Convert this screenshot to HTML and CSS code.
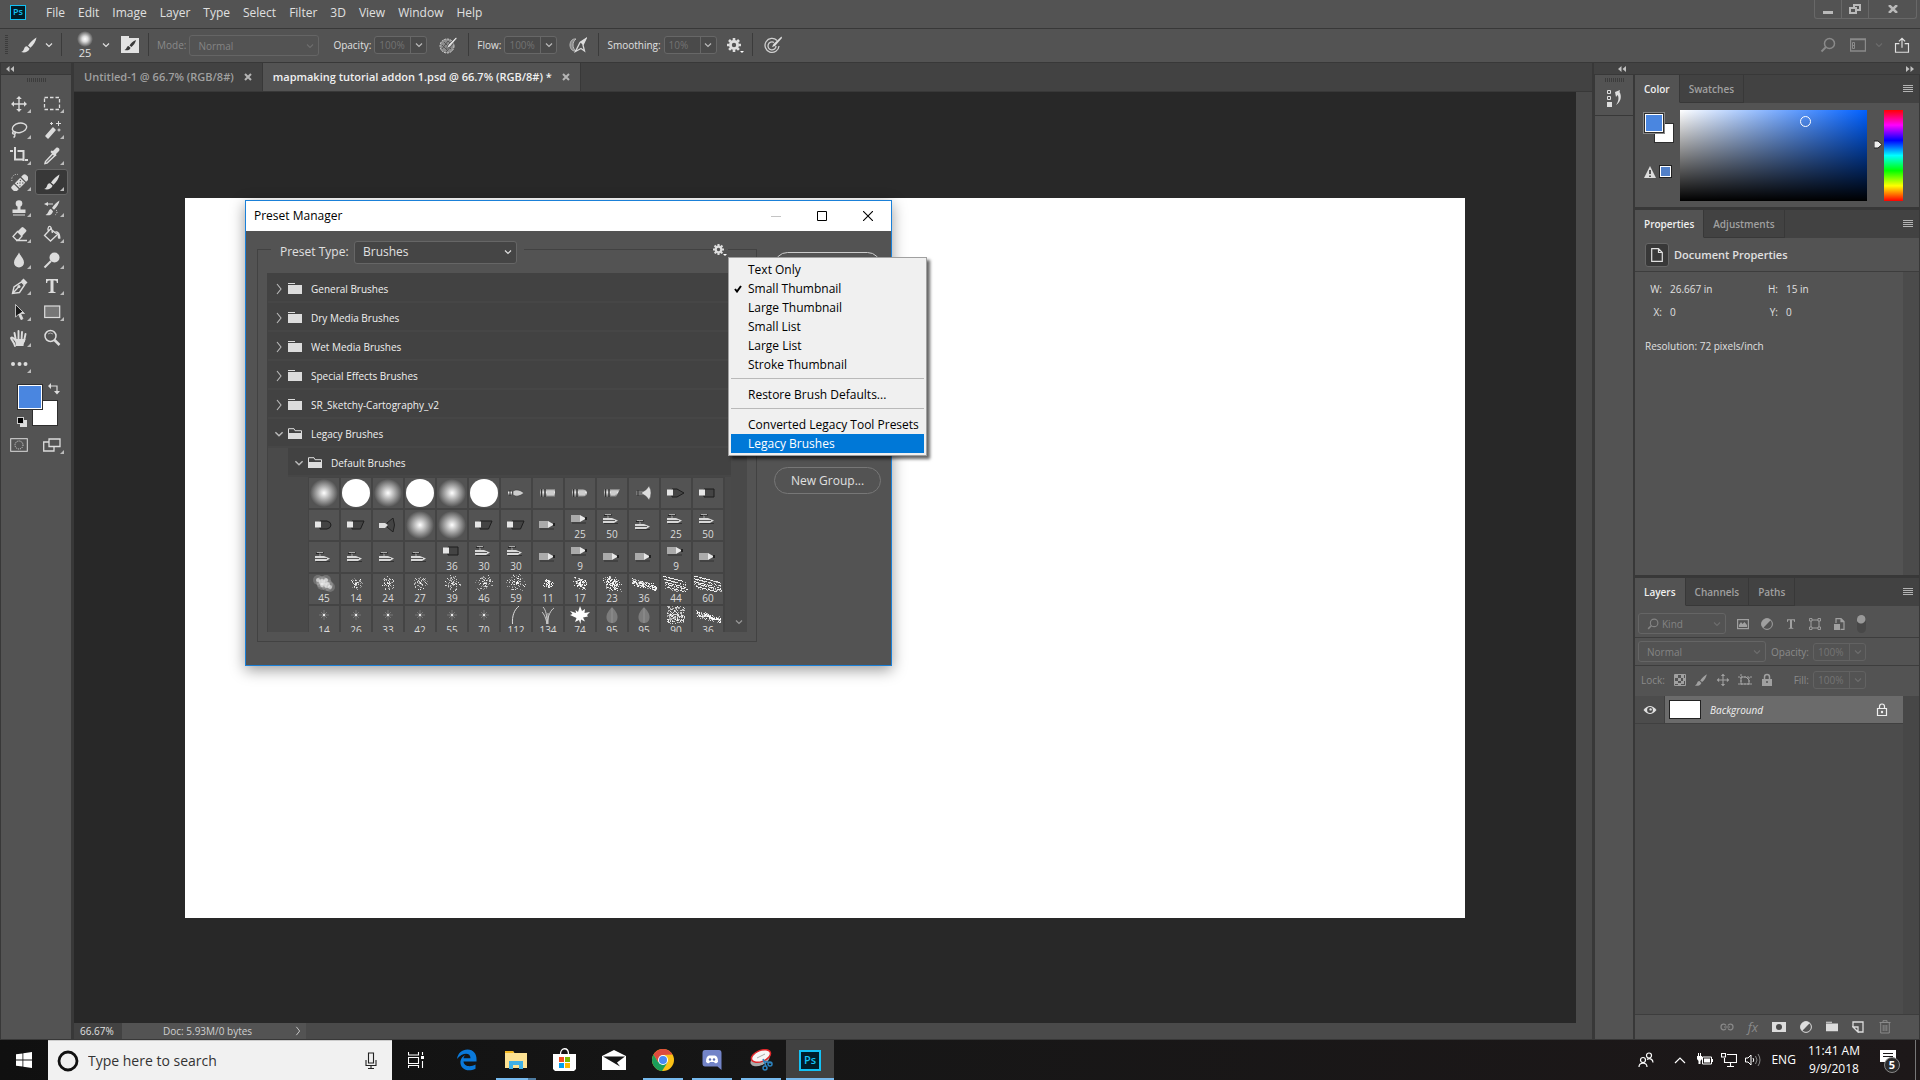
FILE: index.html
```html
<!DOCTYPE html>
<html lang="en">
<head>
    <meta charset="UTF-8">
    <meta name="viewport" content="width=device-width, initial-scale=1.0">
    <title>mapmaking tutorial addon 1.psd</title>
    <link rel="stylesheet" href="styles.css">
</head>
<body>
    <!-- icon sheet -->
    <svg class="sheet" aria-hidden="true">
        <symbol id="i-down" viewBox="0 0 10 10"><path d="M2 3.5 5 6.5 8 3.5" fill="none" stroke="currentColor" stroke-width="1.2"/></symbol>
        <symbol id="i-right" viewBox="0 0 10 12"><path d="M3 1 7 6 3 11" fill="none" stroke="currentColor" stroke-width="1.1"/></symbol>
        <symbol id="i-dbl-left" viewBox="0 0 8 6"><path d="M3.5 0V6L0 3ZM8 0V6L4.500 3Z" fill="currentColor"/></symbol>
        <symbol id="i-dbl-right" viewBox="0 0 8 6"><path d="M0 0V6L3.500 3ZM4.500 0V6L8 3Z" fill="currentColor"/></symbol>
        <symbol id="i-close" viewBox="0 0 8 8"><path d="M1 1 7 7M7 1 1 7" stroke="currentColor" stroke-width="2"/></symbol>
        <symbol id="i-brush" viewBox="0 0 18 18"><path d="M16.500 1.500c-3 1.500-6.500 5-8.500 8l2.500 2.200c3-2.500 5.500-6.700 6-10.200zM7 10.300c-2 0-2.500 1.200-3 2.700-.5 1.500-1.500 2.500-2.800 3 3 1 6.800.4 8.400-3.300z" fill="currentColor"/></symbol>
        <symbol id="i-brushpanel" viewBox="0 0 18 18"><path d="M0 0h8v2h10v15H0z" fill="#e3e3e3"/><path d="M15 4c-3 1-5 3-6.500 5.500l2 1.600C12.500 9 14.500 7 15 4zM7.500 10c-2 0-1.500 3-4 4 2.500.8 5.500.3 6-2.300z" fill="#3a3a3a"/></symbol>
        <symbol id="i-pressure" viewBox="0 0 18 18"><circle cx="8" cy="10" r="7" fill="#8c8c8c" stroke="#d0d0d0" stroke-dasharray="2 1"/><path d="M5 6 12 13M3 9l6 6M9 5l4 4M3 13l6-8M7 16l7-8" stroke="#555"/><path d="M17 1 9 9l-1.500 3.500L11 11l7-8.500z" fill="#dedede" stroke="#535353" stroke-width=".8"/></symbol>
        <symbol id="i-airbrush" viewBox="0 0 18 18"><path d="M7 3C-1 2-1 16 7 15 3 12 3 6 7 3z" fill="#8c8c8c" stroke="#bbb"/><path d="M17 2.500 11 6.500 6.500 15.500 12 12.500 15.500 15 14 9z" fill="none" stroke="#d8d8d8" stroke-width="1.300"/><path d="m18 1.500-7 4.500 3 3z" fill="#ddd"/></symbol>
        <symbol id="i-target" viewBox="0 0 18 18"><g fill="none" stroke="#d0d0d0" stroke-width="1.300"><path d="M13 4.500A7 7 0 1 0 15 10"/><path d="M10 6.500A4 4 0 1 0 12 10"/></g><path d="M17.500.5 9.500 8l-1.500 3 3-1 7-8z" fill="#ddd"/></symbol>
        <symbol id="i-gear" viewBox="0 0 14 14"><circle cx="7" cy="7" r="3.600" fill="none" stroke="currentColor" stroke-width="2.800"/><path d="M7 0v14M0 7h14M2 2l10 10M12 2 2 12" stroke="currentColor" stroke-width="2.600" stroke-dasharray="2.500 9 2.500 99"/></symbol>
        <symbol id="i-search" viewBox="0 0 16 16"><circle cx="9.500" cy="6.500" r="5" fill="none" stroke="currentColor" stroke-width="1.500"/><path d="M6 10 1.500 14.500" stroke="currentColor" stroke-width="2"/></symbol>
        <symbol id="i-workspace" viewBox="0 0 16 14"><path d="M.500 1v12h15V1zM0 1.500h16" fill="none" stroke="currentColor" stroke-width="1.400"/><path d="M2.500 4.500h2v6h-2zM2.500 7.500h2" fill="none" stroke="currentColor"/></symbol>
        <symbol id="i-share" viewBox="0 0 16 18"><path d="M5 7.500H.700v9.700h14.600V7.500H11M8 12V2M4.500 5 8 1.500 11.500 5" fill="none" stroke="currentColor" stroke-width="1.300"/></symbol>
        <symbol id="i-menu" viewBox="0 0 10 8"><path d="M0 .5h10M0 2.500h10M0 4.500h10M0 6.500h10" stroke="currentColor"/></symbol>
        <symbol id="i-history" viewBox="0 0 16 18"><path d="M1.500 1.500h3v3h-3zM1.500 7.500h3v3h-3z" fill="none" stroke="#dedede"/><path d="M1 13h5v5H1zM9 3l5-2-.5 2C16 7 15 13 10 16c3-4 3-8 1.500-10L10 8z" fill="#dedede"/></symbol>

        <symbol id="t-move" viewBox="0 0 18 18"><path d="M9 2v14M2 9h14" stroke="currentColor" stroke-width="1.400"/><path d="m9 1 2.800 3H6.200zM9 17l2.800-3H6.200zM1 9l3-2.800v5.600zM17 9l-3-2.800v5.600z" fill="currentColor"/></symbol>
        <symbol id="t-marquee" viewBox="0 0 18 18"><rect x="1.500" y="2.500" width="15" height="12" fill="none" stroke="currentColor" stroke-width="1.300" stroke-dasharray="3.500 2"/></symbol>
        <symbol id="t-lasso" viewBox="0 0 18 18"><g fill="none" stroke="currentColor" stroke-width="1.400"><ellipse cx="9.500" cy="7" rx="7.300" ry="4.700" transform="rotate(-12 9 7)"/><path d="M4 10.500c-2 .5-2 2.500 0 2.500s2-2 0-2.500M4.500 13c1 1.500 0 3-1 3.500"/></g></symbol>
        <symbol id="t-wand" viewBox="0 0 18 18"><path d="m3 15 7-8 2 2-7 8z" stroke="currentColor" fill="currentColor" stroke-linejoin="round" stroke-width="1.500"/><path d="M7 2.500h3M15.500 0v5M13 2.500h5M16 7.500v3M14.500 9h3M8.500 1v3" stroke="currentColor"/></symbol>
        <symbol id="t-crop" viewBox="0 0 18 18"><path d="M0 4h3M5 0v12.500h7.500M7.500 4h6v10M15 13h3" stroke="currentColor" stroke-width="2" fill="none"/></symbol>
        <symbol id="t-dropper" viewBox="0 0 18 18"><path d="m10 6.500-7.500 8-.5 2 2-.5 8-7.500" fill="none" stroke="currentColor" stroke-width="1.500"/><path d="m8.500 3.500 1.500.5 3-3c2-1.500 4.500 1 3 3l-3 3 .5 1.500-2 1L7.500 5z" fill="currentColor"/></symbol>
        <symbol id="t-heal" viewBox="0 0 18 18"><g transform="rotate(-45 10 10)"><rect x="0" y="6.500" width="20" height="7" rx="2" fill="currentColor"/><path d="M5.500 6v8M14.500 6v8M8 8.500h0M12 8.500h0M10 10h0M8 12h0M12 12h0" stroke="#535353" stroke-width="1.300" stroke-linecap="round"/></g><path d="M2 8A5 5 0 0 1 8 1.500" fill="none" stroke="currentColor" stroke-dasharray="1 1.500"/></symbol>
        <symbol id="t-stamp" viewBox="0 0 18 18"><circle cx="9" cy="4.500" r="3.300" fill="currentColor"/><path d="M7.500 7h3v3.500h5V14h-13v-3.500h5zM3 15.500h12v1H3z" fill="currentColor"/></symbol>
        <symbol id="t-histbrush" viewBox="0 0 18 18"><path d="M16.500 1.500c-3 1.500-5.500 4.500-7.500 7.500l2 1.800c2.500-2.500 5-6 5.500-9.300zM8 10c-3 .5-2 4.500-5.500 6 3 1 6.800 0 7.500-3.800z" fill="currentColor"/><path d="M1 5l4-2v1.500h5v1H5V7z" fill="currentColor"/><path d="M13 11c2 1 1 4-1 5" fill="none" stroke="currentColor" stroke-dasharray="1 1.300"/></symbol>
        <symbol id="t-eraser" viewBox="0 0 18 18"><path d="m7.500 6.500 4-4q1-1 2 0l2.500 2.200q1 1 0 2L12 11z" fill="currentColor"/><path d="M7.500 6.500 3 11.500 6.500 15h2l3.500-4zM6 15.500h11" fill="none" stroke="currentColor" stroke-width="1.300"/></symbol>
        <symbol id="t-bucket" viewBox="0 0 18 18"><path d="m7.500 4-6 6.500 6 5.500 7-6.500zM5.500 6.500C4 2 6.500 0 8 2.500L9.500 8" fill="none" stroke="currentColor" stroke-width="1.300"/><path d="M12 6c4 0 5.500 3 5.500 7.500-3 1.500-3-2-2.500-4z" fill="currentColor"/></symbol>
        <symbol id="t-blur" viewBox="0 0 18 18"><path d="M9 1.500c2 4.500 5 6 5 10a5 5 0 0 1-10 0c0-4 3-5.500 5-10z" fill="currentColor"/></symbol>
        <symbol id="t-dodge" viewBox="0 0 18 18"><circle cx="11.500" cy="6.500" r="5" fill="currentColor"/><path d="m8 10-6.500 6.500" stroke="currentColor" stroke-width="2"/></symbol>
        <symbol id="t-pen" viewBox="0 0 18 18"><path d="M2.500 16.500 4 10l7.500-5 3 3-5 7.500zM3 16l6-6.500" fill="none" stroke="currentColor" stroke-width="1.400"/><circle cx="9" cy="9.500" r="1.500" fill="currentColor"/><path d="m11 4 2.500-2.500 4 4L15 8z" fill="currentColor"/></symbol>
        <symbol id="t-type" viewBox="0 0 18 18"><path d="M3 2h12v4h-1.200c0-1.800-.6-2.500-2-2.500h-1.300V14c0 .8.500 1 2 1v1h-7v-1c1.500 0 2-.2 2-1V3.500H6.200c-1.400 0-2 .7-2 2.500H3z" fill="currentColor"/></symbol>
        <symbol id="t-select" viewBox="0 0 18 18"><path d="M5.500 1.500v12.700l3-3 2.500 5.500 2-1-2.500-5.200h4z" fill="#1b1b1b" stroke="currentColor" stroke-width=".8"/><path d="M8.500 11.200l2.500 5.500 2-1-2.500-5.200h4l-2-2z" fill="currentColor"/></symbol>
        <symbol id="t-rect" viewBox="0 0 18 18"><rect x="1.700" y="3" width="15" height="11.500" fill="#777" stroke="currentColor" stroke-width="1.200"/></symbol>
        <symbol id="t-hand" viewBox="0 0 18 18"><path d="M5 17C4 13 1.500 11 1 9c1-1.200 2.500 0 4 2M6 12 4.500 4M8.500 11V2M11.500 11l.5-8M14 12l1.500-7" fill="none" stroke="currentColor" stroke-width="1.900" stroke-linecap="round"/><path d="M5 10h10.500c-.5 3-2 4-2 7H6z" fill="currentColor"/></symbol>
        <symbol id="t-zoom" viewBox="0 0 18 18"><circle cx="7.500" cy="7" r="5.500" fill="none" stroke="currentColor" stroke-width="1.500"/><path d="M5 5q2-2 5 0" stroke="#aaa" fill="none"/><path d="m11.500 11 5 5" stroke="currentColor" stroke-width="2.500"/></symbol>
        <symbol id="t-more" viewBox="0 0 18 18"><path d="M3 9h.01M9.500 9h.01M15.500 9h.01" stroke="currentColor" stroke-width="4" stroke-linecap="round"/></symbol>
        <symbol id="i-swap" viewBox="0 0 12 12"><path d="M3 3h6v6" fill="none" stroke="currentColor" stroke-width="1.200"/><path d="M0 3l3-3v6zM6 8h6l-3 3.500z" fill="currentColor"/></symbol>
        <symbol id="i-mask" viewBox="0 0 18 14"><rect x=".700" y=".700" width="16.600" height="12.600" fill="none" stroke="currentColor"/><circle cx="9" cy="7" r="4" fill="none" stroke="currentColor" stroke-dasharray="1 1"/></symbol>
        <symbol id="i-screen" viewBox="0 0 18 14"><path d="M6 1h11v7.500H6zM6 4H.700v9H11V8.500" fill="none" stroke="currentColor" stroke-width="1.300"/></symbol>

        <symbol id="i-folder" viewBox="0 0 14 12"><path d="M0 0h7v1H0zM0 2h14v9H0z" fill="currentColor"/></symbol>
        <symbol id="i-folder-open" viewBox="0 0 14 12"><path d="M.500 11V.700h5.500l1 2h6.500V5" fill="none" stroke="currentColor"/><path d="M0 5h14v6H0z" fill="currentColor"/></symbol>
        <symbol id="i-warn" viewBox="0 0 12 12"><path d="M6 0 12 12H0z" fill="#ddd"/><path d="M6 4v4M6 9.500V11" stroke="#333" stroke-width="1.600"/></symbol>
        <symbol id="i-page" viewBox="0 0 12 14"><path d="M.700.700H7.500L11.300 4.500v8.800H.700zM7.500.700v3.800h3.800" fill="none" stroke="#e0e0e0" stroke-width="1.200"/></symbol>
        <symbol id="i-image" viewBox="0 0 12 12"><rect x=".600" y="1.600" width="10.800" height="9" fill="none" stroke="currentColor" stroke-width="1.200"/><path d="M2 9V7l2-3 1.500 2L7.500 4 10 7v2z" fill="currentColor"/></symbol>
        <symbol id="i-adjust" viewBox="0 0 12 12"><circle cx="6" cy="6" r="5.400" fill="none" stroke="currentColor"/><path d="M9.900 2.100A5.500 5.500 0 0 0 2.100 9.900z" fill="currentColor"/></symbol>
        <symbol id="i-shape" viewBox="0 0 12 12"><path d="M2 2h8v8H2z" fill="none" stroke="currentColor"/><path d="M.500.500h2.500v2.500H.500zM9 .500h2.500v2.500H9zM.500 9h2.500v2.500H.500zM9 9h2.500v2.500H9z" fill="#535353" stroke="currentColor" stroke-width=".900"/></symbol>
        <symbol id="i-smart" viewBox="0 0 12 12"><path d="M3 5V.600h5l3 3v7.800H7.500M8 .600v3h3" fill="none" stroke="currentColor" stroke-width="1.200"/><path d="M1 6h6v6H1z" fill="currentColor"/></symbol>
        <symbol id="i-checker" viewBox="0 0 12 12"><path d="M.500.500h11v11H.500z" fill="none" stroke="currentColor"/><path d="M1 1h3v3H1zM7 1h3v3H7zM4 4h3v3H4zM9 4h2v3H9zM1 7h3v3H1zM7 7h3v3H7zM4 9h3v2H4z" fill="currentColor"/></symbol>
        <symbol id="i-artboard" viewBox="0 0 14 12"><path d="M3 0v12M0 3h14M11 3v9M0 10h14" fill="none" stroke="currentColor" stroke-dasharray="2 1"/><path d="M3 3h5l3 3v4H3z" fill="none" stroke="currentColor"/></symbol>
        <symbol id="i-lock" viewBox="0 0 12 14"><path d="M3.500 6V4a2.500 2.500 0 0 1 5 0v2" fill="none" stroke="currentColor" stroke-width="1.500"/><path d="M1 6h10v7H1z" fill="currentColor"/><circle cx="6" cy="9" r="1" fill="#535353"/></symbol>
        <symbol id="i-lock-line" viewBox="0 0 12 14"><path d="M3.500 5.500V3.500a2.500 2.500 0 0 1 5 0v2M1.500 5.500h9v7h-9z" fill="none" stroke="currentColor" stroke-width="1.200"/><circle cx="6" cy="9" r="1.200" fill="currentColor"/></symbol>
        <symbol id="i-eye" viewBox="0 0 14 10"><path d="M.500 5Q7-3 13.500 5 7 13 .500 5z" fill="currentColor"/><circle cx="7" cy="5" r="2.900" fill="#4a4a4a"/><circle cx="7.600" cy="4.400" r="1.200" fill="currentColor"/></symbol>
        <symbol id="i-link" viewBox="0 0 14 8"><path d="M6 2.500C5 .500 1 .500 1 4s4 3.500 5 1.500M8 2.500C9 .500 13 .500 13 4s-4 3.500-5 1.500M4 4h6" fill="none" stroke="currentColor" stroke-width="1.200"/></symbol>
        <symbol id="i-addmask" viewBox="0 0 14 12"><path d="M0 1h14v10H0z" fill="currentColor"/><circle cx="7" cy="6" r="3" fill="#4a4a4a"/></symbol>
        <symbol id="i-new" viewBox="0 0 12 12"><path d="M1 6V1h10v10H6M6 11 1 6h5z" fill="none" stroke="currentColor" stroke-width="1.300"/></symbol>
        <symbol id="i-trash" viewBox="0 0 12 14"><path d="M.500 2.500h11M4 2V.700h4V2M1.700 3v10h8.600V3M4.200 5v6M6 5v6M7.800 5v6" fill="none" stroke="currentColor"/></symbol>

        <!-- brush tips -->
        <linearGradient id="metal" x1="0" y1="0" x2="0" y2="1"><stop offset="0" stop-color="#777"/><stop offset=".4" stop-color="#eee"/><stop offset="1" stop-color="#666"/></linearGradient>
        <radialGradient id="soft"><stop offset="0" stop-color="#fff"/><stop offset=".3" stop-color="#ccc"/><stop offset="1" stop-color="#535353"/></radialGradient>
        <symbol id="b-point" viewBox="0 0 18 10"><path d="M1 3h4v4H1z" fill="url(#metal)"/><path d="M3 2v6" stroke="#333"/><path d="M6 3Q11 0 17 5 11 10 6 7z" fill="#ccc" stroke="#333" stroke-width=".5"/></symbol>
        <symbol id="b-flat" viewBox="0 0 18 10"><path d="M1 1h15v8H1z" fill="url(#metal)"/><path d="M2.500 1v8M6 1v8" stroke="#333" stroke-width="1.500"/><path d="M8 2.500h7v5H8z" fill="#ccc"/></symbol>
        <symbol id="b-curve" viewBox="0 0 18 10"><path d="M1 1h11q4 1 4 4t-4 4H1z" fill="url(#metal)"/><path d="M2.500 1v8M6 1v8" stroke="#333" stroke-width="1.500"/><path d="M8 2.500h6v5H8z" fill="#ccc"/></symbol>
        <symbol id="b-angle" viewBox="0 0 18 10"><path d="M1 1h16l-4 8H1z" fill="url(#metal)"/><path d="M2.500 1v8M6 1v8" stroke="#333" stroke-width="1.500"/><path d="M8 2.500h7l-3 5H8z" fill="#ccc"/></symbol>
        <symbol id="b-fan" viewBox="0 0 18 14"><path d="M1 5h7v4H1z" fill="#777"/><path d="M3 4v6" stroke="#333"/><path d="M7 6q4-1 7-6 4 7 0 14-3-5-7-6z" fill="#ddd" stroke="#555" stroke-width=".5"/></symbol>
        <symbol id="b-dpoint" viewBox="0 0 18 10"><path d="M5 1h5l7 4-7 4H5z" fill="#444" stroke="#1d1d1d"/><path d="M0 1.500h6v6H0z" fill="#e6e6e6"/></symbol>
        <symbol id="b-dflat" viewBox="0 0 18 10"><path d="M5 1h10v8H5z" fill="#444" stroke="#1d1d1d"/><path d="M0 1.500h6v6H0z" fill="#e6e6e6"/></symbol>
        <symbol id="b-dcurve" viewBox="0 0 18 10"><path d="M5 1h7q4 1 4 4t-4 4H5z" fill="#444" stroke="#1d1d1d"/><path d="M0 1.500h6v6H0z" fill="#e6e6e6"/></symbol>
        <symbol id="b-dangle" viewBox="0 0 18 10"><path d="M5 1h12l-3.500 8H5z" fill="#444" stroke="#1d1d1d"/><path d="M0 1.500h6v6H0z" fill="#e6e6e6"/></symbol>
        <symbol id="b-dfan" viewBox="0 0 18 14"><path d="M8 5l6-5q3 7 0 14l-6-5z" fill="#444" stroke="#222"/><path d="M0 5h6l3 2-3 3H0z" fill="#ddd"/></symbol>
        <symbol id="b-pencil" viewBox="0 0 18 10"><path d="M1 9h14" stroke="#333"/><path d="M0 1h9v7H0z" fill="#aaa"/><path d="M9 1l6 3.500L9 8z" fill="#e8e8e8"/><path d="M14 3h2v3h-2z" fill="#222"/></symbol>
        <symbol id="b-air" viewBox="0 0 18 10"><path d="M1 1.500h3M5 1h4" stroke="#222"/><path d="M2 .500h6M5 2v2" stroke="#aaa"/><path d="M1 9.500h14" stroke="#333"/><path d="M0 4h9l6 2.500L11 9H0z" fill="#d8d8d8"/><path d="M0 6.500h12" stroke="#555"/></symbol>
        <symbol id="b-blade" viewBox="0 0 20 18"><path d="M13 0C8 4 6 10 6.500 18" fill="none" stroke="#ddd"/></symbol>
        <symbol id="b-grass" viewBox="0 0 20 18"><path d="M9 18C9 10 8 4 5 1M9 18C10 9 13 4 16 2M9 18C8 12 6 8 4 6M10 18V7" fill="none" stroke="#ccc"/></symbol>
        <symbol id="b-maple" viewBox="0 0 20 18"><path d="M10 0l2 5 3-2-.500 4 5.500-1-3 3 1 1.500-5 1 2 4-4-2L10.500 18 9 14l-4 2 1.500-4L0 9l2.500-1L0 5l6 2-.500-3L8 6z" fill="#fff"/></symbol>
        <symbol id="b-leaf" viewBox="0 0 20 18"><path d="M10 1c3 3 6 7 5.500 11-.500 4-3 5-5.500 5s-5-1-5.500-5C4 8 7 4 10 1z" fill="#7c7c7c"/><path d="M10 2v15" stroke="#929292"/></symbol>
        <symbol id="b-star" viewBox="0 0 20 18"><path d="M10 4v10M5 9h10M7 6l6 6M13 6l-6 6" stroke="#858585" stroke-width=".700"/><circle cx="10" cy="9" r="1.200" fill="#eee"/></symbol>
    </svg>

    <header class="menubar">
        <span class="ps-logo">Ps</span>
        <nav>
            <a href="#">File</a><a href="#">Edit</a><a href="#">Image</a><a href="#">Layer</a><a href="#">Type</a><a href="#">Select</a><a href="#">Filter</a><a href="#">3D</a><a href="#">View</a><a href="#">Window</a><a href="#">Help</a>
        </nav>
        <div class="win-controls">
            <button aria-label="Minimize"><svg width="10" height="10"><path d="M0 7h10v3H0z" fill="#b9b9b9"/></svg></button>
            <button aria-label="Restore"><svg width="12" height="10"><path d="M5 3V1h6v5H8M1 4h6v5H1z" fill="none" stroke="#b9b9b9" stroke-width="2"/></svg></button>
            <button class="wide" aria-label="Close"><svg width="10" height="8"><path d="M1 0l8 8M9 0L1 8" stroke="#b9b9b9" stroke-width="2.500"/></svg></button>
        </div>
    </header>

    <section class="options">
        <span class="grip"></span>
        <svg class="s18 opt-brush"><use href="#i-brush"/></svg>
        <svg class="s10"><use href="#i-down"/></svg>
        <i class="vr"></i>
        <div class="tip"><span class="tip-dot"></span><span>25</span></div>
        <svg class="s10"><use href="#i-down"/></svg>
        <button class="opt-panel" aria-label="Brush settings"><svg class="s18"><use href="#i-brushpanel"/></svg></button>
        <i class="vr"></i>
        <label class="dim" for="mode">Mode:</label>
        <div class="select mode"><select id="mode" disabled><option>Normal</option></select><svg class="s10"><use href="#i-down"/></svg></div>
        <label for="opacity">Opacity:</label>
        <div class="combo"><input id="opacity" value="100%"><button aria-label="Opacity"><svg class="s10"><use href="#i-down"/></svg></button></div>
        <svg class="s18 after-combo"><use href="#i-pressure"/></svg>
        <i class="vr"></i>
        <label for="flow">Flow:</label>
        <div class="combo"><input id="flow" value="100%"><button aria-label="Flow"><svg class="s10"><use href="#i-down"/></svg></button></div>
        <svg class="s18 after-combo"><use href="#i-airbrush"/></svg>
        <i class="vr"></i>
        <label for="smoothing">Smoothing:</label>
        <div class="combo"><input id="smoothing" value="10%"><button aria-label="Smoothing"><svg class="s10"><use href="#i-down"/></svg></button></div>
        <button class="gear" aria-label="Smoothing options"><svg class="s14"><use href="#i-gear"/></svg></button>
        <i class="vr"></i>
        <svg class="s18 opt-target"><use href="#i-target"/></svg>
        <div class="opt-right">
            <svg class="s16 dim"><use href="#i-search"/></svg>
            <svg class="s16 dim"><use href="#i-workspace"/></svg>
            <svg class="s10 faint"><use href="#i-down"/></svg>
            <svg class="s16"><use href="#i-share"/></svg>
        </div>
    </section>

    <main class="workspace">
        <aside class="toolbar">
            <div class="dock-head"><svg class="dbl"><use href="#i-dbl-left"/></svg></div>
            <span class="hgrip"></span>
            <div class="tools">
                <button aria-label="Move"><svg class="s18"><use href="#t-move"/></svg></button>
                <button aria-label="Marquee"><svg class="s18"><use href="#t-marquee"/></svg></button>
                <button aria-label="Lasso"><svg class="s18"><use href="#t-lasso"/></svg></button>
                <button aria-label="Magic wand"><svg class="s18"><use href="#t-wand"/></svg></button>
                <button aria-label="Crop"><svg class="s18"><use href="#t-crop"/></svg></button>
                <button aria-label="Eyedropper"><svg class="s18"><use href="#t-dropper"/></svg></button>
                <button aria-label="Healing brush"><svg class="s18"><use href="#t-heal"/></svg></button>
                <button class="on" aria-label="Brush"><svg class="s18"><use href="#i-brush"/></svg></button>
                <button aria-label="Clone stamp"><svg class="s18"><use href="#t-stamp"/></svg></button>
                <button aria-label="History brush"><svg class="s18"><use href="#t-histbrush"/></svg></button>
                <button aria-label="Eraser"><svg class="s18"><use href="#t-eraser"/></svg></button>
                <button aria-label="Paint bucket"><svg class="s18"><use href="#t-bucket"/></svg></button>
                <button aria-label="Blur"><svg class="s18"><use href="#t-blur"/></svg></button>
                <button aria-label="Dodge"><svg class="s18"><use href="#t-dodge"/></svg></button>
                <button aria-label="Pen"><svg class="s18"><use href="#t-pen"/></svg></button>
                <button aria-label="Type"><svg class="s18"><use href="#t-type"/></svg></button>
                <button aria-label="Path selection"><svg class="s18"><use href="#t-select"/></svg></button>
                <button aria-label="Rectangle"><svg class="s18"><use href="#t-rect"/></svg></button>
                <button aria-label="Hand"><svg class="s18"><use href="#t-hand"/></svg></button>
                <button class="flat" aria-label="Zoom"><svg class="s18"><use href="#t-zoom"/></svg></button>
                <button aria-label="Edit toolbar"><svg class="s18"><use href="#t-more"/></svg></button>
            </div>
            <div class="colors">
                <span class="bg"></span><span class="fg"></span>
                <svg class="swap"><use href="#i-swap"/></svg>
                <span class="reset"></span>
            </div>
            <div class="tools">
                <button class="flat" aria-label="Quick mask"><svg class="s18"><use href="#i-mask"/></svg></button>
                <button aria-label="Screen mode"><svg class="s18"><use href="#i-screen"/></svg></button>
            </div>
        </aside>

        <section class="document">
            <div class="doc-tabs">
                <div class="doc-tab"><span>Untitled-1 @ 66.7% (RGB/8#)</span><button aria-label="Close"><svg class="s8"><use href="#i-close"/></svg></button></div>
                <div class="doc-tab on"><span>mapmaking tutorial addon 1.psd @ 66.7% (RGB/8#) *</span><button aria-label="Close"><svg class="s8"><use href="#i-close"/></svg></button></div>
            </div>
            <div class="stage">
                <div class="pasteboard"><div class="artboard"></div></div>
                <div class="vscroll"></div>
            </div>
            <footer class="status">
                <span class="zoom">66.67%</span>
                <span class="doc-size">Doc: 5.93M/0 bytes<svg class="s10"><use href="#i-right"/></svg></span>
            </footer>

            <!-- preset manager -->
            <div class="dialog" role="dialog" aria-label="Preset Manager">
                <div class="dialog-title">
                    <span>Preset Manager</span>
                    <button aria-label="Minimize" disabled><svg width="10" height="10"><path d="M0 5.500h10" stroke="#c4c4c4"/></svg></button>
                    <button aria-label="Maximize"><svg width="10" height="10"><path d="M.500.500h9v9h-9z" fill="none" stroke="#000"/></svg></button>
                    <button aria-label="Close"><svg width="10" height="10"><path d="M0 0l10 10M10 0L0 10" stroke="#000" stroke-width="1.100"/></svg></button>
                </div>
                <div class="dialog-body">
                    <div class="group">
                        <div class="legend">
                            <i class="line short"></i>
                            <label for="preset">Preset Type:</label>
                            <div class="select preset"><select id="preset"><option>Brushes</option></select><svg class="s10"><use href="#i-down"/></svg></div>
                            <i class="line"></i>
                            <button class="gear" aria-label="Preset options"><svg class="s11"><use href="#i-gear"/></svg></button>
                            <i class="line end"></i>
                        </div>
                        <div class="group-box">
                            <div class="tree">
                                <div class="tree-rows">
                                    <div class="row"><svg class="tw"><use href="#i-right"/></svg><svg class="fold"><use href="#i-folder"/></svg>General Brushes</div>
                                    <div class="row"><svg class="tw"><use href="#i-right"/></svg><svg class="fold"><use href="#i-folder"/></svg>Dry Media Brushes</div>
                                    <div class="row"><svg class="tw"><use href="#i-right"/></svg><svg class="fold"><use href="#i-folder"/></svg>Wet Media Brushes</div>
                                    <div class="row"><svg class="tw"><use href="#i-right"/></svg><svg class="fold"><use href="#i-folder"/></svg>Special Effects Brushes</div>
                                    <div class="row"><svg class="tw"><use href="#i-right"/></svg><svg class="fold"><use href="#i-folder"/></svg>SR_Sketchy-Cartography_v2</div>
                                    <div class="row"><svg class="tw"><use href="#i-down"/></svg><svg class="fold"><use href="#i-folder-open"/></svg>Legacy Brushes</div>
                                    <div class="row sub"><svg class="tw"><use href="#i-down"/></svg><svg class="fold"><use href="#i-folder-open"/></svg>Default Brushes</div>
                                    <div class="brushes" id="brushes"></div>
                                </div>
                                <div class="tree-scroll"><svg class="s10"><use href="#i-down"/></svg></div>
                            </div>
                        </div>
                    </div>
                    <div class="dialog-buttons">
                        <button class="primary" aria-label="Done"></button>
                        <button>New Group...</button>
                    </div>
                </div>
                <ul class="popup" role="menu">
                    <li>Text Only</li>
                    <li class="checked"><svg width="8" height="8"><path d="M1 4l2 2.500L7 1" fill="none" stroke="#000" stroke-width="2"/></svg>Small Thumbnail</li>
                    <li>Large Thumbnail</li>
                    <li>Small List</li>
                    <li>Large List</li>
                    <li>Stroke Thumbnail</li>
                    <li class="sep"></li>
                    <li>Restore Brush Defaults...</li>
                    <li class="sep"></li>
                    <li>Converted Legacy Tool Presets</li>
                    <li class="hot">Legacy Brushes</li>
                </ul>
            </div>
        </section>

        <aside class="dock">
            <div class="dock-head"><svg class="dbl"><use href="#i-dbl-left"/></svg><svg class="dbl"><use href="#i-dbl-right"/></svg></div>
            <div class="dock-cols">
                <div class="strip">
                    <div class="strip-top"><span class="hgrip"></span><button aria-label="History"><svg class="s18"><use href="#i-history"/></svg></button></div>
                </div>
                <div class="panels">
                    <section class="panel color">
                        <div class="tabs"><button class="on">Color</button><button>Swatches</button><svg class="burger"><use href="#i-menu"/></svg></div>
                        <div class="color-body">
                            <div class="color-side">
                                <span class="bg"></span><span class="fg"></span>
                                <div class="gamut"><svg class="s12"><use href="#i-warn"/></svg><i></i></div>
                            </div>
                            <div class="field"><span class="ring"></span></div>
                            <div class="hue"><svg class="hue-arrow" width="8" height="9"><path d="M0 1h4l4 3.500L4 8H0z" fill="#eee" stroke="#222"/></svg></div>
                        </div>
                    </section>
                    <section class="panel properties">
                        <div class="tabs"><button class="on">Properties</button><button>Adjustments</button><svg class="burger"><use href="#i-menu"/></svg></div>
                        <div class="prop-head"><span class="page"><svg width="12" height="14"><use href="#i-page"/></svg></span>Document Properties</div>
                        <div class="prop-body">
                            <dl>
                                <dt>W:</dt><dd>26.667 in</dd><dt>H:</dt><dd>15 in</dd>
                                <dt>X:</dt><dd>0</dd><dt>Y:</dt><dd>0</dd>
                            </dl>
                            <p>Resolution: 72 pixels/inch</p>
                        </div>
                    </section>
                    <section class="panel layers">
                        <div class="tabs"><button class="on">Layers</button><button>Channels</button><button>Paths</button><svg class="burger"><use href="#i-menu"/></svg></div>
                        <div class="lrow">
                            <div class="select kind"><svg class="s12 lens"><use href="#i-search"/></svg><select aria-label="Filter" disabled><option>Kind</option></select><svg class="s10"><use href="#i-down"/></svg></div>
                            <div class="filters">
                                <svg class="s12"><use href="#i-image"/></svg><svg class="s12"><use href="#i-adjust"/></svg><svg class="s12"><use href="#t-type"/></svg><svg class="s12"><use href="#i-shape"/></svg><svg class="s12"><use href="#i-smart"/></svg>
                            </div>
                            <span class="toggle"></span>
                        </div>
                        <div class="lrow">
                            <div class="select blend"><select aria-label="Blend mode" disabled><option>Normal</option></select><svg class="s10"><use href="#i-down"/></svg></div>
                            <label for="lop">Opacity:</label>
                            <div class="combo"><input id="lop" value="100%" disabled><button aria-label="Layer opacity"><svg class="s10"><use href="#i-down"/></svg></button></div>
                        </div>
                        <div class="lrow last">
                            <span class="lock-label">Lock:</span>
                            <div class="locks">
                                <svg class="s12"><use href="#i-checker"/></svg><svg class="s14"><use href="#i-brush"/></svg><svg class="s14"><use href="#t-move"/></svg><svg class="s14"><use href="#i-artboard"/></svg><svg class="s14"><use href="#i-lock"/></svg>
                            </div>
                            <label for="fill">Fill:</label>
                            <div class="combo"><input id="fill" value="100%" disabled><button aria-label="Fill"><svg class="s10"><use href="#i-down"/></svg></button></div>
                        </div>
                        <div class="layer-list">
                            <div class="layer">
                                <span class="vis"><svg width="14" height="10"><use href="#i-eye"/></svg></span>
                                <div class="layer-main"><span class="thumb"></span><em>Background</em><svg width="12" height="14"><use href="#i-lock-line"/></svg></div>
                            </div>
                        </div>
                        <div class="layer-foot">
                            <svg class="s14 dim"><use href="#i-link"/></svg>
                            <em class="fx">fx</em>
                            <svg class="s14"><use href="#i-addmask"/></svg>
                            <svg class="s12"><use href="#i-adjust"/></svg>
                            <svg class="s12"><use href="#i-folder"/></svg>
                            <svg class="s12"><use href="#i-new"/></svg>
                            <svg class="s14 dim"><use href="#i-trash"/></svg>
                        </div>
                    </section>
                </div>
            </div>
        </aside>
    </main>

    <footer class="taskbar">
        <button class="start" aria-label="Start"><svg width="16" height="16"><path d="M0 2.300 6.500 1.400V7.600H0zM7.300 1.300 16 0V7.600H7.300zM0 8.400H6.500V14.600L0 13.700zM7.300 8.400H16V16L7.300 14.700z" fill="#fff"/></svg></button>
        <div class="search">
            <svg width="22" height="22"><circle cx="11" cy="11" r="9" fill="none" stroke="#111" stroke-width="2.800"/></svg>
            <input aria-label="Search" placeholder="Type here to search">
            <svg width="12" height="18"><path d="M3.500 1h5v10h-5zM1 8v5.500h10V8M6 13.500V16M3 16.500h6" fill="none" stroke="#222" stroke-width="1.100"/></svg>
        </div>
        <button class="taskview" aria-label="Task view"><svg width="16" height="16"><path d="M.500 0v3h10V0M.500 5.500h10v6H.500zM.500 16v-2.500h10V16M14.500 0v3M14.500 9v7" fill="none" stroke="#fff" stroke-width="1.100"/><path d="M13 4h3v3h-3z" fill="#fff"/></svg></button>
        <div class="apps">
            <button aria-label="Edge"><svg width="22" height="22"><path d="M1 10C2 4 6 .500 11.500.500c6 0 9 4.500 9 9.500v2.500H7.500c.300 5 7 6 12 3v4.200C11 24 3.500 19.500 4.500 12 5 9 7 7 9.500 6 8.300 7 7.700 8 7.600 9.200H14.500C14.500 3 6 3.500 1 10z" fill="#0a79da"/></svg></button>
            <button class="run stack" aria-label="File Explorer"><svg width="22" height="20"><path d="M0 1h8l1.500 2H22v15H0z" fill="#fde293"/><path d="M0 1h8l1 2H0z" fill="#f5b922"/><path d="M4 19v-8h14v8h-4v-4H8v4z" fill="#3fb0e6"/></svg></button>
            <button aria-label="Store"><svg width="24" height="24"><path d="M0 6h23v15l-2 2H2l-2-2z" fill="#fff"/><path d="M7.500 6c0-7 8-7 8 0" fill="none" stroke="#fff" stroke-width="1.300"/><path d="M6 9h5v5H6z" fill="#f04e22"/><path d="M12 9h5v5h-5z" fill="#7fba00"/><path d="M6 15h5v5H6z" fill="#00a1f1"/><path d="M12 15h5v5h-5z" fill="#ffb900"/></svg></button>
            <button aria-label="Mail"><svg width="24" height="20"><path d="M0 6 12 0l12 6v14H0z" fill="#fff"/><path d="M1 6.500h22l-8 6 3 4L1 6.500z" fill="#161616"/></svg></button>
            <button class="run" aria-label="Chrome"><svg width="22" height="22" viewBox="0 0 22 22"><circle cx="11" cy="11" r="11" fill="#fbc116"/><path d="M1.500 5.500A11 11 0 0 1 20.500 5.500L11 6 6.300 13.500z" fill="#dd4b3e"/><path d="M1.500 5.500A11 11 0 0 0 10 22L15.500 13.500 6 13z" fill="#1b9e5a"/><circle cx="11" cy="11" r="5" fill="#fff"/><circle cx="11" cy="11" r="4" fill="#4a8af4"/></svg></button>
            <button class="run" aria-label="Discord"><svg width="20" height="22"><path d="M3 1h14q2.500 0 2.500 3v17l-4-3.500H3q-2.500 0-2.500-3V4Q.500 1 3 1z" fill="#7384c8"/><path d="M4 13C4 9 5 7 7 6.500h6c2 .500 3 2.500 3 6.500-2 2-3 1.500-4 0H8c-1 1.500-2 2-4 0z" fill="#fff"/><circle cx="8" cy="10.500" r="1.200" fill="#6070b5"/><circle cx="12" cy="10.500" r="1.200" fill="#6070b5"/></svg></button>
            <button class="run" aria-label="Snipping Tool"><svg width="24" height="22"><ellipse cx="11" cy="11" rx="10" ry="5.500" transform="rotate(-22 11 11)" fill="#a9a9a9"/><ellipse cx="12" cy="7" rx="10" ry="5.500" transform="rotate(-22 12 7)" fill="#f7f7f7" stroke="#e0272a" stroke-width="1.500"/><path d="M8 9l8-4" stroke="#aaa"/><g fill="none" stroke="#2d83bf" stroke-width="1.500"><path d="M14 10l3 7M22 14l-8-2"/><circle cx="16" cy="19" r="2"/><circle cx="21" cy="15" r="2"/></g></svg></button>
            <button class="run on" aria-label="Photoshop"><span class="ps-logo big">Ps</span></button>
        </div>
        <div class="tray">
            <svg width="16" height="16"><g fill="none" stroke="#fff" stroke-width="1.200"><circle cx="11" cy="3.500" r="2.500"/><circle cx="5" cy="8" r="2.500"/><path d="M1 15c0-5 8-5 8 0M9 7.500c3-2 6 0 6 3"/></g></svg>
            <svg width="12" height="8" class="up"><path d="M1 7l5-5 5 5" fill="none" stroke="#fff" stroke-width="1.200"/></svg>
            <svg width="16" height="14"><path d="M5.500 4h9v7h-9z" fill="none" stroke="#fff"/><path d="M7 5.500h6v4H7zM15 6h1v3h-1zM0 3h5v3L3.500 8v3h-2V8L0 6zM1 0h1v3H1zM3 0h1v3H3z" fill="#fff"/></svg>
            <svg width="16" height="14"><path d="M6 1.500h9.500v8H3.500V5M.500.500h4v3.500h-4zM9.500 9.500V13M6 13.500h7" fill="none" stroke="#fff" stroke-width="1.100"/></svg>
            <svg width="16" height="14"><path d="M.500 5h2.500l3-3v10L3 9H.500z" fill="none" stroke="#fff"/><path d="M8 5q1.500 2 0 4" stroke="#fff" fill="none"/><path d="M10.500 3q3 4 0 8M13 1q4 6 0 12" fill="none" stroke="#888"/></svg>
            <span>ENG</span>
            <time>11:41 AM<br>9/9/2018</time>
            <div class="notes"><svg width="16" height="16"><path d="M0 0h16v12H9l-4 4v-4H0z" fill="#fff"/><path d="M3 3.500h10M3 6.500h10" stroke="#1a1718"/></svg><b>5</b></div>
            <i class="peek"></i>
        </div>
    </footer>

    <script src="script.js"></script>
</body>
</html>
```
FILE: styles.css
```css
* {
    box-sizing: border-box;
}

body {
    margin: 0;
    height: 100vh;
    display: flex;
    flex-direction: column;
    overflow: hidden;
    background: #535353;
    color: #e0e0e0;
    font: 10px/14px "Open Sans", "Noto Sans", sans-serif;
}

.sheet {
    position: absolute;
    width: 0;
    height: 0;
}

button, input, select {
    font: inherit;
    color: inherit;
    background: none;
    border: 0;
    padding: 0;
    margin: 0;
}

button {
    display: flex;
    align-items: center;
    justify-content: center;
}

a {
    color: inherit;
    text-decoration: none;
}

svg {
    flex: none;
}

.s8 { width: 8px; height: 8px; }
.s10 { width: 10px; height: 10px; }
.s11 { width: 11px; height: 11px; }
.s12 { width: 12px; height: 12px; }
.s14 { width: 14px; height: 14px; }
.s16 { width: 16px; height: 16px; }
.s18 { width: 18px; height: 18px; }

.dim { color: #8a8a8a; }
.faint { color: #6b6b6b; }

/* menu bar */
.menubar {
    height: 29px;
    display: flex;
    align-items: center;
    padding-left: 10px;
    border-bottom: 1px solid #383838;
    font-size: 12px;
}

.ps-logo {
    width: 16px;
    height: 15px;
    border: 1px solid #13c1f4;
    background: #001d29;
    color: #13c1f4;
    font: 600 9px/12px "Open Sans", sans-serif;
    text-align: center;
}

.ps-logo.big {
    width: 22px;
    height: 21px;
    border-width: 2px;
    font-size: 11px;
    line-height: 16px;
}

.menubar .ps-logo {
    margin-bottom: 3px;
}

.menubar nav {
    display: flex;
    gap: 13px;
    margin: 0 auto 2px 20px;
}

.win-controls {
    align-self: flex-start;
    display: flex;
    height: 19px;
    margin-right: 3px;
    border: 1px solid #686868;
    border-top: 0;
    border-radius: 0 0 3px 3px;
}

.win-controls button {
    width: 27px;
    border-right: 1px solid #686868;
}

.win-controls .wide {
    width: 47px;
    border: 0;
}

/* options bar */
.options {
    height: 34px;
    display: flex;
    align-items: center;
    padding: 0 10px 2px 5px;
    border-bottom: 1px solid #383838;
}

.grip {
    width: 3px;
    height: 20px;
    background: repeating-linear-gradient(#3c3c3c 0 1px, transparent 1px 2px);
}

.opt-brush {
    margin: 0 6px 0 12px;
}

.vr {
    width: 1px;
    height: 23px;
    background: #3b3b3b;
    margin: 0 8px 0 7px;
}

.tip {
    width: 30px;
    display: flex;
    flex-direction: column;
    align-items: center;
    font-size: 11px;
    line-height: 12px;
    margin-right: 1px;
}

.tip-dot {
    width: 16px;
    height: 16px;
    border-radius: 50%;
    background: radial-gradient(closest-side, #fff, #ddd 35%, #535353);
}

.opt-panel {
    margin: 0 2px 0 10px;
}

.options label {
    margin-right: 3px;
    white-space: nowrap;
}

.select {
    position: relative;
    display: flex;
    border: 1px solid #666;
    border-radius: 3px;
    background: #454545;
}

.select select {
    appearance: none;
    width: 100%;
    padding-left: 8px;
    opacity: 1;
    outline: 0;
}

.select .s10 {
    position: absolute;
    right: 3px;
    top: 50%;
    margin-top: -5px;
    pointer-events: none;
}

.select.mode, .layers .select {
    background: #535353;
    color: #848484;
    border-color: #656565;
}

.select.mode {
    width: 130px;
    height: 21px;
    margin-right: 14px;
    margin-top: 2px;
}

.select.mode .s10, .layers .s10 {
    color: #6d6d6d;
}

.combo {
    width: 53px;
    height: 18px;
    display: flex;
    border: 1px solid #676767;
    border-radius: 3px;
    background: #4a4a4a;
}

.combo input {
    flex: 1;
    min-width: 0;
    padding-left: 4px;
    color: #737373;
}

.combo button {
    width: 16px;
    border-left: 1px solid #676767;
    color: #bbb;
}

.after-combo {
    margin: 0 4px 0 12px;
}

.gear {
    position: relative;
    color: #dedede;
}

.gear::after {
    content: "";
    position: absolute;
    right: -3px;
    bottom: -1px;
    border: 2px solid transparent;
    border-top-color: #fff;
    border-bottom: 0;
}

.options .gear {
    margin: 0 4px 0 10px;
}

.opt-target {
    margin-left: 3px;
}

.opt-right {
    margin-left: auto;
    display: flex;
    align-items: center;
    gap: 14px;
}

.opt-right .faint {
    margin: 0 -4px 0 -6px;
}

/* workspace */
.workspace {
    flex: 1;
    min-height: 0;
    display: flex;
    background: #383838;
    gap: 2px;
    border-bottom: 1px solid #383838;
}

.toolbar {
    width: 72px;
    flex: none;
    display: flex;
    flex-direction: column;
    background: #535353;
    border-left: 1px solid #383838;
    border-right: 1px solid #383838;
}

.dock-head {
    height: 12px;
    display: flex;
    align-items: center;
    justify-content: space-between;
    padding: 0 5px;
    background: #424242;
    border-bottom: 1px solid #383838;
    color: #c0c0c0;
}

.dbl {
    width: 8px;
    height: 6px;
}

.hgrip {
    width: 19px;
    height: 4px;
    margin: 3px auto 0;
    background: repeating-linear-gradient(90deg, #3c3c3c 0 1px, transparent 1px 2px);
}

.tools {
    display: grid;
    grid-template-columns: 1fr 1fr;
    grid-auto-rows: 26px;
    padding: 0 3px 0 1px;
    color: #dcdcdc;
}

.hgrip + .tools {
    margin-top: 9px;
}

.tools button {
    position: relative;
    border: 1px solid transparent;
    border-radius: 3px;
}

.tools .on {
    background: #383838;
    border-color: #666;
}

.tools button:not(.flat)::after {
    content: "";
    position: absolute;
    right: 3px;
    bottom: 3px;
    border: 2px solid #bbb;
    border-left-color: transparent;
    border-top-color: transparent;
}

.colors {
    position: relative;
    height: 51px;
    margin: 4px 0 0 16px;
}

.colors .fg, .colors .bg, .color-side .fg, .color-side .bg {
    position: absolute;
    border: 1px solid #2e2e2e;
}

.colors .fg {
    left: 0;
    top: 3px;
    width: 26px;
    height: 26px;
    background: #4a86e0;
    box-shadow: inset 0 0 0 1px #fff;
}

.colors .bg {
    left: 15px;
    top: 19px;
    width: 26px;
    height: 26px;
    background: #fff;
}

.swap {
    position: absolute;
    left: 31px;
    top: 2px;
    width: 12px;
    height: 12px;
    color: #dcdcdc;
}

.reset {
    position: absolute;
    left: 0;
    top: 36px;
    width: 7px;
    height: 7px;
    background: #000;
    border: 1px solid #ccc;
    box-shadow: 3px 3px 0 #dcdcdc;
}

/* document window */
.document {
    flex: 1;
    min-width: 0;
    position: relative;
    display: flex;
    flex-direction: column;
}

.doc-tabs {
    height: 29px;
    display: flex;
    background: #424242;
    border-bottom: 1px solid #383838;
    font-size: 11px;
    font-weight: 600;
    color: #a0a0a0;
}

.doc-tab {
    display: flex;
    align-items: center;
    gap: 10px;
    padding: 0 10px;
    border-right: 1px solid #383838;
}

.doc-tab.on {
    background: #535353;
    color: #f0f0f0;
}

.doc-tab button {
    color: #b4b4b4;
}

.stage {
    flex: 1;
    min-height: 0;
    display: flex;
    background: #282828;
}

.pasteboard {
    flex: 1;
    display: flex;
    align-items: center;
    justify-content: center;
}

.artboard {
    width: 85.22%;
    aspect-ratio: 16 / 9;
    background: #fff;
}

.vscroll {
    width: 16px;
    background: #4a4a4a;
}

.status {
    height: 16px;
    display: flex;
    background: #4a4a4a;
}

.status span {
    display: flex;
    align-items: center;
}

.zoom {
    width: 48px;
    padding-left: 6px;
    background: #424242;
}

.doc-size {
    width: 184px;
    padding: 0 3px 0 41px;
    justify-content: space-between;
    background: #535353;
    color: #cfcfcf;
}

/* dialog */
.dialog {
    position: absolute;
    left: 171px;
    top: 137px;
    width: 647px;
    height: 466px;
    display: flex;
    flex-direction: column;
    background: #535353;
    border: 1px solid #1a80d8;
    box-shadow: 0 4px 14px rgba(0, 0, 0, 0.4);
}

.dialog-title {
    height: 30px;
    display: flex;
    align-items: center;
    gap: 36px;
    padding: 0 18px 0 8px;
    background: #fff;
    color: #000;
    font-size: 12px;
}

.dialog-title span {
    margin-right: auto;
}

.dialog-body {
    flex: 1;
    min-height: 0;
    display: flex;
    gap: 17px;
    padding: 10px 10px 23px 11px;
}

.group {
    width: 500px;
    display: flex;
    flex-direction: column;
}

.legend {
    position: relative;
    z-index: 1;
    height: 16px;
    display: flex;
    align-items: center;
    font-size: 12px;
}

.line {
    flex: 1;
    height: 1px;
    background: #424242;
}

.line.short {
    flex: none;
    width: 14px;
    margin-right: 9px;
}

.line.end {
    flex: none;
    width: 29px;
    margin-left: 4px;
}

.legend label {
    width: 74px;
    white-space: nowrap;
    margin-top: 6px;
}

.select.preset {
    width: 163px;
    height: 23px;
    margin: 6px 7px 0 0;
}

.group-box {
    flex: 1;
    min-height: 0;
    margin-top: -8px;
    padding: 24px 9px 9px;
    border: 1px solid #424242;
    border-top: 0;
}

.tree {
    height: 100%;
    display: flex;
    overflow: hidden;
    background: #4a4a4a;
    border-left: 1px solid #424242;
    border-top: 1px solid #424242;
}

.tree-rows {
    flex: 1;
    min-width: 0;
}

.row {
    height: 29px;
    display: flex;
    align-items: center;
    padding-left: 5px;
    background: #424242;
    box-shadow: inset 0 -2px #464646;
    color: #f0f0f0;
}

.row.sub {
    margin-left: 20px;
}

.tw {
    width: 12px;
    height: 12px;
    margin-right: 3px;
    color: #bbb;
}

.fold {
    width: 14px;
    height: 12px;
    margin-right: 9px;
    color: #dcdcdc;
}

.brushes {
    width: 417px;
    margin-left: 40px;
    display: grid;
    grid-template-columns: repeat(13, 30px);
    grid-auto-rows: 30px;
    gap: 2px;
    padding: 1px;
    background: #444;
}

.brush {
    display: flex;
    flex-direction: column;
    align-items: center;
    justify-content: center;
    background: #535353;
    line-height: 12px;
    color: #dcdcdc;
}

.brush.numbered {
    justify-content: flex-end;
}

.tree-scroll {
    width: 16px;
    display: flex;
    align-items: flex-end;
    padding: 0 3px 5px;
    color: #999;
    background: #494949;
}

.dialog-buttons {
    flex: 1;
    display: flex;
    flex-direction: column;
    gap: 188px;
    padding-top: 11px;
}

.dialog-buttons button {
    height: 27px;
    border: 1px solid #777;
    border-radius: 14px;
    font-size: 12px;
}

.dialog-buttons .primary {
    border: 1px solid #ccc;
}

.popup {
    position: absolute;
    left: 482px;
    top: 56px;
    width: 199px;
    margin: 0;
    padding: 2px;
    list-style: none;
    background: #f0f0f0;
    border: 1px solid #a0a0a0;
    box-shadow: 3px 3px 3px rgba(0, 0, 0, 0.6);
    color: #000;
    font-size: 12px;
    line-height: 19px;
}

.popup li {
    height: 19px;
    padding-left: 17px;
    white-space: nowrap;
}

.popup .checked {
    display: flex;
    align-items: center;
    gap: 6px;
    padding-left: 3px;
}

.popup .sep {
    height: 1px;
    margin: 4px 0 6px;
    background: #b9b9b9;
}

.popup .hot {
    background: #0078d7;
    color: #fff;
}

/* right dock */
.dock {
    width: 326px;
    flex: none;
    display: flex;
    flex-direction: column;
}

.dock .dock-head {
    padding: 0 6px 0 24px;
}

.dock-cols {
    flex: 1;
    min-height: 0;
    display: flex;
    gap: 2px;
    padding-left: 1px;
}

.strip {
    width: 38px;
    background: #535353;
}

.strip-top {
    display: flex;
    flex-direction: column;
    align-items: center;
    height: 41px;
    border-bottom: 1px solid #383838;
}

.strip-top button {
    margin-top: 7px;
}

.panels {
    flex: 1;
    min-width: 0;
    display: flex;
    flex-direction: column;
    gap: 3px;
    padding-right: 1px;
}

.panel {
    background: #535353;
    display: flex;
    flex-direction: column;
}

.tabs {
    height: 28px;
    flex: none;
    display: flex;
    background: #424242;
    font-weight: 600;
    color: #a0a0a0;
}

.tabs button {
    padding: 0 9px;
    border-right: 1px solid #383838;
    border-bottom: 1px solid #383838;
}

.tabs .on {
    background: #535353;
    border-bottom-color: #535353;
    color: #f0f0f0;
}

.burger {
    width: 10px;
    height: 8px;
    margin: 10px 6px 0 auto;
    color: #b4b4b4;
}

.color {
    height: 132px;
}

.color-body {
    display: flex;
    padding: 7px 16px 0 9px;
    height: 98px;
}

.color-side {
    position: relative;
    width: 36px;
}

.color-side .fg {
    left: 0;
    top: 3px;
    width: 20px;
    height: 20px;
    background: #4a86e0;
    box-shadow: inset 0 0 0 1px #fff, 0 0 0 1px #888;
}

.color-side .bg {
    left: 10px;
    top: 13px;
    width: 20px;
    height: 20px;
    background: #fff;
}

.gamut {
    display: flex;
    align-items: center;
    gap: 3px;
    margin-top: 55px;
}

.gamut i {
    width: 13px;
    height: 13px;
    border: 1px solid #222;
    background: #5280c8;
    box-shadow: inset 0 0 0 1px #fff;
}

.field {
    position: relative;
    flex: 1;
    background: linear-gradient(transparent, #000), linear-gradient(90deg, #fff, #0060ff);
}

.ring {
    position: absolute;
    left: 67%;
    top: 12%;
    width: 11px;
    height: 11px;
    margin: -5px;
    border: 1px solid #fff;
    border-radius: 50%;
}

.hue {
    position: relative;
    width: 19px;
    margin-left: 17px;
    background: linear-gradient(#f00, #f0f, #00f, #0ff, #0f0, #ff0, #f00);
}

.hue-arrow {
    position: absolute;
    left: -10px;
    top: 30px;
}

.properties {
    height: 365px;
}

.prop-head {
    height: 34px;
    display: flex;
    align-items: center;
    gap: 5px;
    padding-left: 10px;
    border-bottom: 1px solid #3d3d3d;
    font-size: 11px;
    font-weight: 600;
}

.page {
    width: 24px;
    height: 24px;
    display: flex;
    align-items: center;
    justify-content: center;
    background: #383838;
    border: 1px solid #666;
    border-radius: 3px;
}

.prop-body {
    flex: 1;
    padding: 10px;
    border-right: 16px solid #4b4b4b;
}

.prop-body dl {
    display: grid;
    grid-template-columns: 17px 83px 17px 1fr;
    gap: 9px 8px;
    margin: 0 0 20px;
}

.prop-body dt {
    text-align: right;
}

.prop-body dd, .prop-body p {
    margin: 0;
}

.layers {
    flex: 1;
    min-height: 0;
}

.lrow {
    height: 28px;
    flex: none;
    display: flex;
    align-items: center;
    padding-left: 3px;
    border-bottom: 1px solid #3d3d3d;
    color: #8a8a8a;
}

.tabs + .lrow {
    height: 32px;
    padding-top: 4px;
}

.lrow.last {
    height: 30px;
    padding-bottom: 2px;
    border: 0;
}

.lrow label {
    margin: 0 4px 0 auto;
}

.lrow .combo {
    margin-right: 53px;
    background: #535353;
    border-color: #626262;
}

.lrow .combo button {
    border-color: #626262;
}

.select.kind {
    width: 88px;
    height: 21px;
    align-items: center;
}

.kind .lens {
    margin-left: 8px;
}

.kind select {
    padding-left: 3px;
}

.select.blend {
    width: 128px;
    height: 21px;
}

.filters, .locks {
    display: flex;
    gap: 12px;
    margin-left: 11px;
    color: #a0a0a0;
}

.toggle {
    width: 9px;
    height: 18px;
    margin-left: 12px;
    border-radius: 5px;
    background: radial-gradient(circle at 4px 4px, #999 4px, transparent 5px), #484848;
}

.lock-label {
    padding-left: 3px;
}

.locks {
    gap: 8px;
    margin-left: 9px;
    align-items: center;
}

.layer-list {
    flex: 1;
    background: #4c4c4c;
    border-right: 16px solid #474747;
}

.layer {
    height: 28px;
    display: flex;
    border-bottom: 1px solid #404040;
}

.vis {
    width: 30px;
    display: flex;
    align-items: center;
    justify-content: center;
    border-right: 1px solid #404040;
}

.layer-main {
    flex: 1;
    display: flex;
    align-items: center;
    padding: 0 15px 0 4px;
    background: #6b6b6b;
    color: #f0f0f0;
}

.thumb {
    width: 32px;
    height: 19px;
    margin-right: 9px;
    background: #fff;
    border: 1px solid #222;
}

.layer-main em {
    flex: 1;
}

.layer-foot {
    height: 25px;
    display: flex;
    align-items: center;
    justify-content: flex-end;
    gap: 14px;
    padding-right: 27px;
    border-top: 1px solid #3d3d3d;
    color: #dcdcdc;
}

.fx {
    font-size: 13px;
    color: #8a8a8a;
}

/* taskbar */
.taskbar {
    height: 40px;
    flex: none;
    display: flex;
    background: linear-gradient(90deg, #101010, #161616 40%, #1d1819);
    color: #fff;
}

.start, .taskview {
    width: 48px;
}

.search {
    width: 344px;
    display: flex;
    align-items: center;
    padding: 0 15px 0 9px;
    background: #f1f1f1;
    border-top: 1px solid #ccc;
}

.search input {
    flex: 1;
    padding-left: 9px;
    font-size: 14px;
    outline: 0;
}

.search input::placeholder {
    color: #333;
    opacity: 1;
}

.apps {
    display: flex;
    gap: 1px;
    padding-left: 3px;
}

.apps button {
    width: 48px;
    position: relative;
}

.apps .run::after {
    content: "";
    position: absolute;
    left: 4px;
    right: 4px;
    bottom: 0;
    height: 2px;
    background: #76b9ed;
}

.apps .stack::after {
    background: linear-gradient(90deg, #76b9ed 80%, #4d7ba0 80%);
}

.apps .on {
    background: #414141;
}

.apps .on::after {
    left: 0;
    right: 0;
}

.tray {
    margin-left: auto;
    display: flex;
    align-items: center;
    gap: 8px;
    font-size: 12px;
    line-height: 18px;
    text-align: center;
}

.tray .up {
    margin: 0 3px 0 12px;
}

.tray time {
    margin: 0 8px 0 4px;
}

.tray span {
    margin-left: 2px;
}

.notes {
    position: relative;
    width: 24px;
    height: 20px;
}

.notes b {
    position: absolute;
    left: 8px;
    top: 7px;
    width: 16px;
    height: 16px;
    border: 1px solid #888;
    border-radius: 50%;
    background: #2b2b2b;
    font-size: 11px;
    line-height: 14px;
}

.peek {
    width: 1px;
    height: 40px;
    margin: 0 4px 0 7px;
    background: #777;
}
```
FILE: script.js
```js
const rows = [
    'soft hard soft hard soft hard point flat curve angle fan dpoint dflat',
    'dcurve dangle dfan soft soft dangle dangle pencil pencil:25 air:50 air air:25 air:50',
    'air air air air dflat:36 air:30 air:30 pencil pencil:9 pencil pencil pencil:9 pencil',
    'cloud:45 spray:14 spray:24 spray:27 spray:39 spray:46 spray:59 chalk:11 chalk:17 chalk:23 wide:36 lines:44 lines:60',
    'star:14 star:26 star:33 star:42 star:55 star:70 blade:112 grass:134 maple:74 leaf:95 leaf:95 mesh:90 wide:36'
];

// small seeded generator, so that the spatter looks the same on each load
let seed = 7;
function rnd() {
    seed = (seed * 16807) % 2147483647;
    return seed / 2147483647;
}

function dot(x, y, w, op) {
    return `<rect x="${Math.round(x)}" y="${Math.round(y)}" width="${w}" height="1" fill="#fff" opacity="${op.toFixed(2)}"/>`;
}

function spatter(kind, size) {
    let out = '';
    if (kind === 'cloud') {
        // soft overlapping puffs
        [[8, 6, 3], [12, 8, 4], [16, 6, 3], [17, 11, 4], [20, 13, 3], [12, 11, 3]].forEach(([x, y, r]) => {
            out += `<circle cx="${x}" cy="${y}" r="${r + 2}" fill="#fff" opacity=".18"/><circle cx="${x}" cy="${y}" r="${r - 1}" fill="#fff" opacity=".55"/>`;
        });
    }
    if (kind === 'spray') {
        const spread = 5 + size / 12;
        for (let i = 0; i < 40 + size; i++) {
            const a = rnd() * Math.PI * 2;
            const r = rnd() * spread;
            out += dot(14 + Math.cos(a) * r, 9 + Math.sin(a) * r, 1, 0.25 + rnd() * 0.6);
        }
    }
    if (kind === 'chalk') {
        const spread = 2 + size / 3;
        for (let i = 0; i < size * 6; i++) {
            const x = (rnd() + rnd() - 1) * spread;
            const y = (rnd() + rnd() - 1) * spread * 0.8 + x / 4;
            out += dot(14 + x, 9 + y, 1, 0.5 + rnd() * 0.5);
        }
    }
    if (kind === 'wide') {
        for (let i = 0; i < 170; i++) {
            const x = 2 + rnd() * 24;
            out += dot(x, 3 + x / 4 + (rnd() + rnd()) * 4, 1, 0.4 + rnd() * 0.6);
        }
    }
    if (kind === 'lines') {
        const from = size > 50 ? 0 : 3;
        for (let line = 0; line < 5; line++) {
            for (let x = from; x < 28 - from; x++) {
                const y = 1 + line * 3 + x / 4 + (line < 3 ? 0 : -1);
                if (rnd() > 0.18 && y < 18) out += dot(x + line - 2, y, 1, 0.8 + rnd() * 0.2);
                if (rnd() > 0.7) out += dot(x, y + 1, 1, 0.6);
            }
        }
    }
    if (kind === 'mesh') {
        for (let i = 0; i < 190; i++) out += dot(5 + rnd() * 17, rnd() * 17, 1, 0.4 + rnd() * 0.5);
    }
    return `<svg width="28" height="18">${out}</svg>`;
}

function thumb(kind, size) {
    if (kind === 'soft') return '<svg width="30" height="30"><circle cx="15" cy="15" r="14" fill="url(#soft)"/></svg>';
    if (kind === 'hard') return '<svg width="30" height="30"><circle cx="15" cy="15" r="14" fill="#fff"/></svg>';
    if (['cloud', 'spray', 'chalk', 'wide', 'lines', 'mesh'].includes(kind)) return spatter(kind, size);
    const tall = ['star', 'blade', 'grass', 'maple', 'leaf'].includes(kind);
    return `<svg width="${tall ? 20 : 18}" height="${tall || size ? 18 : 14}"><use href="#b-${kind}"/></svg>`;
}

document.getElementById('brushes').innerHTML = rows.join(' ').split(' ').map(item => {
    const [kind, size] = item.split(':');
    return `<div class="brush${size ? ' numbered' : ''}">${thumb(kind, Number(size))}${size ? `<span>${size}</span>` : ''}</div>`;
}).join('');
```
